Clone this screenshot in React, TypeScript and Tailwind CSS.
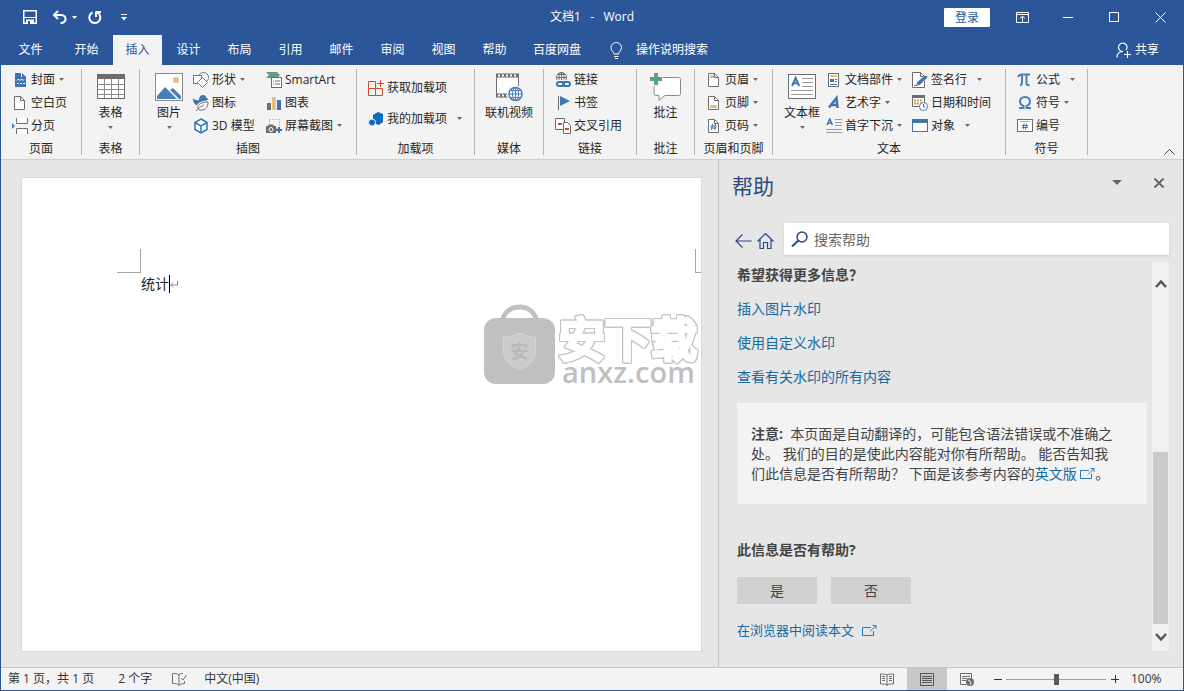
import type { ReactNode } from "react";

const BLUE = "#4a7ebb";
const GREY = "#6d6d6d";

function Caret({ className = "text-[#6a6a6a]" }: { className?: string }) {
  return (
    <svg width="5" height="3" viewBox="0 0 5 3" className={"shrink-0 " + className} aria-hidden="true">
      <path d="M0 0h5L2.5 3z" fill="currentColor" />
    </svg>
  );
}

function Svg({ w = 16, h = 16, children }: { w?: number; h?: number; children: ReactNode }) {
  return (
    <svg width={w} height={h} viewBox={`0 0 ${w} ${h}`} fill="none" className="shrink-0" aria-hidden="true">
      {children}
    </svg>
  );
}

/* ---------- ribbon icons ---------- */

const CoverIcon = () => (
  <Svg>
    <path d="M3 1h6v4h5v10H3z" fill="#3f74ad" />
    <path d="M10 1l4 4h-4z" fill="#3f74ad" />
    <path d="M5 8.500l1.500-1.500 1.500 1.500 1.500-1.500 1.500 1.500 1-1" stroke="#fff" />
    <path d="M5 11.500h8" stroke="#fff" strokeDasharray="2 1" />
  </Svg>
);
const BlankIcon = () => (
  <Svg>
    <path d="M2.500 1.500h6l4 4v9h-10z" fill="#fff" stroke={GREY} />
    <path d="M8.500 1.500v4h4" stroke={GREY} />
  </Svg>
);
const BreakIcon = () => (
  <Svg>
    <path d="M4.500 0v5.500h11V0M4.500 16v-5.500h11V16" fill="#fff" stroke={GREY} />
    <path d="M0 5l3 3-3 3z" fill={BLUE} />
  </Svg>
);
const TableIcon = () => (
  <Svg w={28} h={26}>
    <rect x="0.500" y="0.500" width="27" height="24" fill="#fff" stroke={GREY} />
    <path d="M0 0h28v5H0z" fill={GREY} />
    <path d="M7.500 5v19M14.500 5v19M21.500 5v19M1 10.500h26M1 15.500h26M1 20.500h26" stroke="#8a8a8a" />
  </Svg>
);
const PictureIcon = () => (
  <Svg w={28} h={28}>
    <rect x="0.500" y="0.500" width="27" height="27" fill="#fff" stroke="#8a8a8a" />
    <circle cx="21" cy="7" r="3" fill="#e6bf7c" />
    <path d="M2 26v-3l8-9 12 12z" fill={BLUE} />
    <path d="M15 17l3-2 8 8v3h-2z" fill={BLUE} />
  </Svg>
);
const ShapesIcon = () => (
  <Svg>
    <circle cx="10.500" cy="5.500" r="5" fill="#fff" stroke={BLUE} />
    <rect x="0.500" y="3.500" width="8" height="8" fill="#fff" stroke={BLUE} />
    <path d="M9.500 5.500l5 5-5 5-5-5z" fill="#fff" stroke="#5a82b0" />
  </Svg>
);
const IconsIcon = () => (
  <Svg>
    <path d="M0 3.500c2 1.500 4 2 6 1.500C6 2 7.500 0 10 0c2 0 3.500 1.500 3.500 3L15.500 4l-2 1.500C13 9 10 11 6 11 2 11 0 7 0 3.500z" fill="#3f74ad" />
    <path d="M5 13c0-4 4-6 10-6 0 5-2 8-7 8-1.500 0-3-.500-3-2z" fill="#fff" stroke="#f3f3f3" strokeWidth="3" />
    <path d="M5 13c0-4 4-6 10-6 0 5-2 8-7 8-1.500 0-3-.500-3-2z" fill="#fff" stroke={GREY} />
    <path d="M3 16c2-3 5-4.500 8-6" stroke={GREY} />
  </Svg>
);
const CubeIcon = () => (
  <Svg>
    <path d="M8 1l6 3.500v7L8 15l-6-3.500v-7z" fill="#fff" stroke="#2a78b8" strokeWidth="1.500" />
    <path d="M2 4.500L8 8l6-3.500M8 8v7" stroke="#2a78b8" strokeWidth="1.500" />
  </Svg>
);
const SmartArtIcon = () => (
  <Svg>
    <path d="M0 0h11l3 3-3 3H7v3H5V6H0l3-3z" fill="#5c9f84" />
    <rect x="5.500" y="5.500" width="10" height="10" fill="#fff" stroke={GREY} />
    <path d="M7 9h1M9 9h5M7 12h1M9 12h5" stroke={GREY} />
  </Svg>
);
const ChartIcon = () => (
  <Svg>
    <path d="M1 8h4v7H1z" fill={GREY} />
    <path d="M6 2h4v13H6z" fill="#e6bf7c" />
    <path d="M11 5h4v10h-4z" fill="#3f74ad" />
  </Svg>
);
const ScreenshotIcon = () => (
  <Svg>
    <rect x="3.500" y="1.500" width="10" height="9" stroke="#8a8a8a" strokeDasharray="1 2" />
    <path d="M0 8h2l1-1.500h4L8 8h2v7H0z" fill={GREY} />
    <circle cx="5" cy="11.500" r="2" stroke="#fff" />
    <path d="M13 9v6M10 12h6" stroke="#3f74ad" strokeWidth="2" />
  </Svg>
);
const GetAddinsIcon = () => (
  <Svg>
    <path d="M.500 1.500h7v7h-7zM.500 8.500h7v7h-7zM7.500 8.500h7v7h-7zM12.500 0v7M9 3.500h7" stroke="#c8502a" />
  </Svg>
);
const MyAddinsIcon = () => (
  <Svg>
    <path d="M5 4l5-3 5 2v8l-4 3-3-1-3-4z" fill="#0f6cbd" />
    <circle cx="4" cy="11.500" r="3.500" fill="#0f6cbd" stroke="#f3f3f3" />
  </Svg>
);
const VideoIcon = () => (
  <Svg w={30} h={28}>
    <rect x="2.500" y="2.500" width="22" height="20" fill="#fff" stroke={GREY} />
    <path d="M2 2.500h23M2 22.500h23" stroke={GREY} strokeWidth="4" />
    <path d="M4 2.500h20M4 22.500h20" stroke="#fff" strokeWidth="2" strokeDasharray="2 2" />
    <circle cx="21.500" cy="21" r="8.500" fill="#f3f3f3" />
    <circle cx="21.500" cy="21" r="6.500" fill="#fff" stroke={BLUE} strokeWidth="1.500" />
    <ellipse cx="21.500" cy="21" rx="3" ry="6.500" stroke={BLUE} />
    <path d="M15 21h13M16 17.500h11M16 24.500h11M21.500 14.500v13" stroke={BLUE} />
  </Svg>
);
const LinkIcon = () => (
  <Svg>
    <circle cx="6.500" cy="5.500" r="5" fill="#fff" stroke={GREY} />
    <path d="M1.500 5.500h10M6.500.500v10M3 2.500h7" stroke={GREY} />
    <ellipse cx="6.500" cy="5.500" rx="2.500" ry="5" stroke={GREY} />
    <path d="M1 8h15v8H1z" fill="#f3f3f3" />
    <rect x="2" y="10" width="7" height="4" rx="2" stroke="#3f74ad" strokeWidth="2" />
    <rect x="8" y="10" width="7" height="4" rx="2" stroke="#3f74ad" strokeWidth="2" />
  </Svg>
);
const BookmarkIcon = () => (
  <Svg>
    <path d="M3.500 1v14" stroke={GREY} />
    <path d="M5 1l10 5-10 5z" fill="#3f74ad" />
  </Svg>
);
const CrossRefIcon = () => (
  <Svg>
    <path d="M.500.500h9v11h-9z" fill="#fff" stroke={GREY} />
    <path d="M3 6h4" stroke="#c8502a" strokeWidth="2" />
    <path d="M8.500 4.500h4l3 3v8h-7z" fill="#fff" stroke={GREY} />
    <path d="M10 11h4" stroke="#c8502a" strokeWidth="2" />
  </Svg>
);
const CommentIcon = () => (
  <Svg w={32} h={30}>
    <path d="M4.500 5.500h24q2 0 2 2v14q0 2-2 2H15l-6 5v-5H6q-2 0-2-2z" fill="#fff" stroke="#8a8a8a" />
    <path d="M6 0v14M0 7h13" stroke="#f3f3f3" strokeWidth="6" />
    <path d="M6 1v12M0 7h12" stroke="#5c9f84" strokeWidth="4" />
  </Svg>
);
const HeaderFooterIcon = ({ kind }: { kind: "head" | "foot" | "number" }) => (
  <Svg w={12} h={14}>
    <path d="M1.500.500h6l4 4v9h-10z" fill="#fff" stroke={GREY} />
    <path d="M7.500.500v4h4" stroke={GREY} />
    {kind === "head" && <path d="M3 2h4v3H3z" fill="#e6bf7c" />}
    {kind === "foot" && <path d="M3 9h7v3H3z" fill="#e6bf7c" />}
    {kind === "number" && <path d="M5.500 5l-1 6M8.500 5l-1 6M3.500 7h6M3.500 9h6" stroke="#3f74ad" />}
  </Svg>
);
const LetterA = ({ x, y, s }: { x: number; y: number; s: number }) => (
  <path
    d={`M${x} ${y + s}L${x + s * 0.45} ${y}L${x + s * 0.9} ${y + s}M${x + s * 0.2} ${y + s * 0.65}h${s * 0.5}`}
    stroke="#3f74ad"
    strokeWidth={s > 6 ? 2 : 1.5}
  />
);
const TextBoxIcon = () => (
  <Svg w={28} h={26}>
    <rect x="0.500" y="0.500" width="27" height="24" fill="#fff" stroke={GREY} />
    <LetterA x={4} y={4} s={8} />
    <path d="M14 4.500h11M14 8.500h11M14 12.500h11M3 16.500h22M3 20.500h22" stroke="#9a9a9a" />
  </Svg>
);
const PartsIcon = () => (
  <Svg>
    <rect x="2.500" y="1.500" width="10" height="13" fill="#fff" stroke={GREY} />
    <path d="M4 3h7v2H4z" fill="#e6bf7c" />
    <path d="M4 7h4v3H4z" fill="#3f74ad" />
    <path d="M9 7.500h2M9 9.500h2M4 12.500h7" stroke="#3f74ad" />
  </Svg>
);
const WordArtIcon = () => (
  <Svg>
    <path d="M3 12.500L10.500 3l1 10M5 10h6" stroke="#3f74ad" strokeWidth="2.500" />
  </Svg>
);
const DropCapIcon = () => (
  <Svg>
    <LetterA x={1} y={1} s={6} />
    <path d="M9 1.500h7M9 4.500h7M9 7.500h7M0 11.500h16M0 14.500h16" stroke="#9a9a9a" />
  </Svg>
);
const SignatureIcon = () => (
  <Svg>
    <path d="M.500.500h8l4 4v11H.500z" fill="#fff" stroke={GREY} />
    <path d="M8.500.500v4h4" stroke={GREY} />
    <path d="M4 14l1-4 8-7 3 2-8 8z" fill="#3f74ad" stroke="#f3f3f3" strokeWidth=".500" />
    <path d="M2 13.500h3" stroke={GREY} />
  </Svg>
);
const DateIcon = () => (
  <Svg>
    <rect x=".500" y=".500" width="12" height="11" fill="#fff" stroke={GREY} />
    <path d="M0 0h13v3H0z" fill={GREY} />
    <path d="M2 5.500h9M2 8.500h9" stroke="#cf9a45" strokeWidth="2" strokeDasharray="2 1" />
    <circle cx="11.500" cy="11.500" r="4" fill="#fff" stroke={BLUE} />
    <path d="M11.500 9v3h2" stroke={BLUE} />
  </Svg>
);
const ObjectIcon = () => (
  <Svg>
    <rect x=".500" y="1.500" width="15" height="12" fill="#fff" stroke="#3f74ad" />
    <path d="M0 1h16v4H0z" fill="#3f74ad" />
  </Svg>
);
const PiIcon = () => (
  <Svg>
    <path d="M1 5c1-2 2-2.500 4-2.500h8M5 3v7c0 2-.500 3-2 3.500M9.500 3v8c0 2 1 2.500 3 2" stroke={BLUE} strokeWidth="2" />
  </Svg>
);
const OmegaIcon = () => (
  <Svg>
    <path d="M2 13h4.500v-2C4 10 3 8.500 3 6.500 3 4 5 2 8 2s5 2 5 4.500c0 2-1 3.500-3.500 4.500v2H14" stroke={BLUE} strokeWidth="2" />
  </Svg>
);
const NumberIcon = () => (
  <Svg>
    <rect x=".500" y="1.500" width="15" height="12" fill="#fff" stroke={GREY} />
    <path d="M3 3.500h10" stroke="#b0b0b0" />
    <path d="M7 5.500l-1 6M9.500 5.500l-1 6M5 7.500h6M5 9.500h6" stroke="#3f74ad" />
  </Svg>
);

/* ---------- ribbon building blocks ---------- */

function Group({ label, width, children }: { label: string; width: string; children: ReactNode }) {
  return (
    <section className={"flex shrink-0 " + width} aria-label={label}>
      <div className="flex min-w-0 flex-1 flex-col pt-[3px]">
        <div className="flex h-[69px] shrink-0">{children}</div>
        <div className="whitespace-nowrap text-center leading-6">{label}</div>
      </div>
      <div className="my-1 w-px bg-[#b4b4b4]" />
    </section>
  );
}

function Small({ icon, label, caret, wide }: { icon: ReactNode; label: string; caret?: boolean; wide?: boolean }) {
  return (
    <button className="flex h-[23px] items-center gap-[3px] whitespace-nowrap">
      {icon}
      <span>{label}</span>
      {caret && <span className={wide ? "pl-[7px]" : "pl-px"}><Caret /></span>}
    </button>
  );
}

function Big({ icon, label, caret }: { icon: ReactNode; label: string; caret?: boolean }) {
  return (
    <button className="flex flex-col items-center whitespace-nowrap pt-[3px]">
      <span className="flex h-8 items-center justify-center">{icon}</span>
      <span className="leading-[20px]">{label}</span>
      {caret && <span className="flex h-2 items-center"><Caret /></span>}
    </button>
  );
}

const Col = ({ className = "", children }: { className?: string; children: ReactNode }) => (
  <div className={"flex flex-col items-start " + className}>{children}</div>
);

const Center = ({ children }: { children: ReactNode }) => (
  <div className="flex flex-1 flex-col items-center">{children}</div>
);

function Ribbon() {
  return (
    <div className="flex h-[95px] shrink-0 border-b border-[#cfcfcf] bg-[#f3f3f3] text-[#262626]">
      <Group label="页面" width="w-[81px]">
        <Col className="pl-[11px]">
          <Small icon={<CoverIcon />} label="封面" caret />
          <Small icon={<BlankIcon />} label="空白页" />
          <Small icon={<BreakIcon />} label="分页" />
        </Col>
      </Group>
      <Group label="表格" width="w-[58px]">
        <Center><Big icon={<TableIcon />} label="表格" caret /></Center>
      </Group>
      <Group label="插图" width="w-[217px]">
        <Col className="w-[53px] pl-[15px]"><Big icon={<PictureIcon />} label="图片" caret /></Col>
        <Col className="w-[73px]">
          <Small icon={<ShapesIcon />} label="形状" caret />
          <Small icon={<IconsIcon />} label="图标" />
          <Small icon={<CubeIcon />} label="3D 模型" />
        </Col>
        <Col>
          <Small icon={<SmartArtIcon />} label="SmartArt" />
          <Small icon={<ChartIcon />} label="图表" />
          <Small icon={<ScreenshotIcon />} label="屏幕截图" caret />
        </Col>
      </Group>
      <Group label="加载项" width="w-[118px]">
        <Col className="gap-2 pl-[11px] pt-2">
          <Small icon={<GetAddinsIcon />} label="获取加载项" />
          <Small icon={<MyAddinsIcon />} label="我的加载项" caret wide />
        </Col>
      </Group>
      <Group label="媒体" width="w-[69px]">
        <Center><Big icon={<VideoIcon />} label="联机视频" /></Center>
      </Group>
      <Group label="链接" width="w-[93px]">
        <Col className="pl-[11px]">
          <Small icon={<LinkIcon />} label="链接" />
          <Small icon={<BookmarkIcon />} label="书签" />
          <Small icon={<CrossRefIcon />} label="交叉引用" />
        </Col>
      </Group>
      <Group label="批注" width="w-[58px]">
        <Center><Big icon={<CommentIcon />} label="批注" /></Center>
      </Group>
      <Group label="页眉和页脚" width="w-[78px]">
        <Col className="pl-3">
          <Small icon={<span className="pr-[3px]"><HeaderFooterIcon kind="head" /></span>} label="页眉" caret />
          <Small icon={<span className="pr-[3px]"><HeaderFooterIcon kind="foot" /></span>} label="页脚" caret />
          <Small icon={<span className="pr-[3px]"><HeaderFooterIcon kind="number" /></span>} label="页码" caret />
        </Col>
      </Group>
      <Group label="文本" width="w-[233px]">
        <Col className="w-[53px] pl-[11px]"><Big icon={<TextBoxIcon />} label="文本框" caret /></Col>
        <Col className="w-[86px]">
          <Small icon={<PartsIcon />} label="文档部件" caret />
          <Small icon={<WordArtIcon />} label="艺术字" caret />
          <Small icon={<DropCapIcon />} label="首字下沉" caret />
        </Col>
        <Col>
          <Small icon={<SignatureIcon />} label="签名行" caret wide />
          <Small icon={<DateIcon />} label="日期和时间" />
          <Small icon={<ObjectIcon />} label="对象" caret wide />
        </Col>
      </Group>
      <Group label="符号" width="w-[82px]">
        <Col className="pl-[11px]">
          <Small icon={<PiIcon />} label="公式" caret wide />
          <Small icon={<OmegaIcon />} label="符号" caret />
          <Small icon={<NumberIcon />} label="编号" />
        </Col>
      </Group>
      <button className="ml-auto self-end px-2 pb-1" aria-label="折叠功能区">
        <Svg w={11} h={6}><path d="M.500 5.500l5-5 5 5" stroke="#444" /></Svg>
      </button>
    </div>
  );
}

/* ---------- title bar and tabs ---------- */

function TitleBar() {
  return (
    <header className="grid h-[34px] shrink-0 grid-cols-[1fr_auto_1fr] items-center">
      <div className="flex items-center pl-[22px]">
        <button aria-label="保存">
          <Svg w={14} h={14}>
            <path d="M.750.750h12.500v12.500H.750z" stroke="#fff" strokeWidth="1.500" />
            <path d="M1 7.500h12" stroke="#fff" />
            <path d="M3 9.500h8V14H3z" fill="#fff" />
            <path d="M5 11h2v3H5z" fill="#2b579a" />
          </Svg>
        </button>
        <button className="flex items-center gap-[5px] pl-[15px]" aria-label="撤消">
          <Svg w={15} h={14}>
            <path d="M6 1L2 5l4 4M2 5h7c3 0 4.500 2 4.500 4S12 13 8.500 13" stroke="#fff" strokeWidth="2" />
          </Svg>
          <Caret className="text-white" />
        </button>
        <button className="pl-[11px]" aria-label="恢复">
          <Svg w={14} h={14}>
            <path d="M4.500 2.500a5.500 5.500 0 1 0 5 .200M8 7V1.500M8 2h5" stroke="#fff" strokeWidth="2" />
          </Svg>
        </button>
        <button className="pl-[19px]" aria-label="自定义快速访问工具栏">
          <Svg w={6} h={7}><path d="M0 .500h6" stroke="#fff" /><path d="M0 3h6L3 6.500z" fill="#fff" /></Svg>
        </button>
      </div>
      <h1 className="whitespace-pre text-white">文档1   -   Word</h1>
      <div className="flex h-full items-center justify-end">
        <button className="mr-[9px] h-[19px] w-[46px] rounded-[1px] bg-white leading-[19px] text-[#2b579a]">登录</button>
        <button className="flex w-[46px] justify-center" aria-label="功能区显示选项">
          <Svg w={13} h={11}><path d="M.500.500h12v10H.500zM.500 2.500h12M6.500 10V4.500M4 6.500l2.500-2.500L9 6.500" stroke="#fff" /></Svg>
        </button>
        <button className="flex w-[46px] justify-center" aria-label="最小化">
          <Svg w={10} h={10}><path d="M0 5.500h10" stroke="#fff" /></Svg>
        </button>
        <button className="flex w-[46px] justify-center" aria-label="最大化">
          <Svg w={10} h={10}><path d="M.500.500h9v9h-9z" stroke="#fff" /></Svg>
        </button>
        <button className="flex w-[46px] justify-center" aria-label="关闭">
          <Svg w={11} h={11}><path d="M.500.500l10 10M10.500.500l-10 10" stroke="#fff" /></Svg>
        </button>
      </div>
    </header>
  );
}

const TABS = ["开始", "插入", "设计", "布局", "引用", "邮件", "审阅", "视图", "帮助"];

function TabBar() {
  return (
    <nav className="flex h-[31px] shrink-0 pt-px text-white">
      <button className="w-[59px]">文件</button>
      <div className="flex gap-[2px] pl-[2px]">
        {TABS.map((t) => (
          <button key={t} className={t === "插入" ? "w-[49px] bg-[#f3f3f3] text-[#2b579a]" : "w-[49px]"}>{t}</button>
        ))}
        <button className="px-3">百度网盘</button>
      </div>
      <button className="flex items-center gap-[13px] pl-[17px]">
        <Svg w={13} h={17}>
          <path d="M4 12c0-2-3-3-3-6.500a5.250 5 0 0 1 10.500 0C11.500 9 8.500 10 8.500 12zM4 14.500h4.500M5 16.500h3" stroke="#fff" />
        </Svg>
        操作说明搜索
      </button>
      <button className="ml-auto flex items-center gap-1 pr-6">
        <Svg w={15} h={16}>
          <path d="M7 9.500a4.250 4.250 0 1 1 3-1.500M1 15.500c0-3 2-5.500 5-6M8 12.500h7M11.500 9v7" stroke="#fff" strokeWidth="1.200" />
        </Svg>
        共享
      </button>
    </nav>
  );
}

/* ---------- document ---------- */

function Watermark() {
  return (
    <div className="absolute right-1 top-[126px] flex select-none items-end gap-1 text-[#c0c0c0]" aria-hidden="true">
      <svg width="71" height="80" viewBox="0 0 71 80">
        <path d="M18 18C20 8 27 3 35.500 3S51 8 53 18" fill="none" stroke="#c0c0c0" strokeWidth="5" />
        <rect y="14" width="71" height="66" rx="12" fill="#c0c0c0" />
        <path d="M35.500 29c5 3 10 4 16 4v14c0 9-7 15-16 19-9-4-16-10-16-19V33c6 0 11-1 16-4z" fill="#cbcbc9" stroke="#d6d6d2" />
        <text x="35.500" y="54" textAnchor="middle" fontSize="18" fontWeight="700" fill="#b8b8b8" fontFamily="Noto Sans CJK SC">安</text>
      </svg>
      <div className="flex flex-col">
        <span className="text-[46px] font-normal leading-[42px] text-white [-webkit-text-stroke:4px_white] [filter:drop-shadow(1px_0_0_#c4c4c4)_drop-shadow(-1px_0_0_#c4c4c4)_drop-shadow(0_1px_0_#c4c4c4)_drop-shadow(0_-1px_0_#c4c4c4)]">安下载</span>
        <span className="pl-[3px] font-['Open_Sans'] text-[29px] font-semibold leading-[25px]">anxz.com</span>
      </div>
    </div>
  );
}

function DocumentArea() {
  return (
    <main className="flex min-w-0 flex-1 pb-4 pl-[21px] pr-[17px] pt-[18px]">
      <div className="relative flex-1 overflow-hidden bg-white pt-[71px] outline outline-[#d9d9d9]">
        <div className="flex justify-between pl-[95px]">
          <div className="h-6 w-6 border-b border-r border-[#a6a6a6]" />
          <div className="h-6 w-[6px] border-b border-l border-[#a6a6a6]" />
        </div>
        <div className="flex items-center pl-[119px] pt-px text-sm text-[#222]">
          <span>统计</span>
          <span className="h-[18px] w-px bg-black" />
          <Svg w={8} h={8}><path d="M7.500 1v4H1M3 2.500L.500 5 3 7.500" stroke="#8a8a8a" /></Svg>
        </div>
        <Watermark />
      </div>
    </main>
  );
}

/* ---------- help pane ---------- */

const ExternalIcon = () => (
  <svg width="15" height="11" viewBox="0 0 15 11" fill="none" className="inline-block align-baseline" aria-hidden="true">
    <path d="M9 2.500H.500v8h11V6M8 6.500L14 .500M10.500.500H14V4" stroke="#2a78b8" />
  </svg>
);

function ScrollBar() {
  return (
    <div className="flex w-[17px] shrink-0 flex-col items-center bg-[#f0f0f0] px-px" aria-hidden="true">
      <div className="flex h-[42px] items-center">
        <Svg w={12} h={9}><path d="M1 8l5-5.500L11 8" stroke="#555" strokeWidth="2.500" /></Svg>
      </div>
      <div className="w-full grow-[148]" />
      <div className="w-full grow-[173] bg-[#cacaca]" />
      <div className="flex h-[27px] items-center">
        <Svg w={12} h={9}><path d="M1 1l5 5.500L11 1" stroke="#555" strokeWidth="2.500" /></Svg>
      </div>
    </div>
  );
}

function HelpPane() {
  return (
    <aside className="flex w-[465px] shrink-0 flex-col border-l border-[#c0c0c0] pb-4 pr-[14px] text-sm text-[#444]">
      <div className="flex h-[46px] items-center justify-between pl-[13px] pt-[5px]">
        <h2 className="text-[21px] text-[#2a4a80]">帮助</h2>
        <div className="flex items-center gap-[31px] pb-[6px] pr-1">
          <button aria-label="任务窗格选项">
            <Svg w={10} h={5}><path d="M0 0h10L5 5z" fill="#666" /></Svg>
          </button>
          <button aria-label="关闭">
            <Svg w={12} h={10}><path d="M1.500.500l9 9M10.500.500l-9 9" stroke="#666" strokeWidth="2" /></Svg>
          </button>
        </div>
      </div>
      <div className="flex items-center pl-4 pt-[17px]">
        <button className="pt-[3px]" aria-label="后退">
          <Svg w={17} h={14}><path d="M16.500 7H1M7.500.500L1 7l6.500 6.500" stroke="#2a4a80" strokeWidth="1.200" /></Svg>
        </button>
        <button className="pl-[5px] pt-[3px]" aria-label="主页">
          <Svg w={17} h={16}><path d="M.500 8.500l8-8 8 8M3 6.500v9h3.500v-6h4v6H14v-9" stroke="#2a4a80" strokeWidth="1.200" /></Svg>
        </button>
        <label className="ml-[10px] flex h-8 flex-1 items-center gap-[6px] bg-white pl-[7px] shadow-sm">
          <Svg w={17} h={16}><circle cx="11" cy="6" r="5" stroke="#2a4a80" strokeWidth="1.500" /><path d="M7.500 9.500L1 15.500" stroke="#2a4a80" strokeWidth="2" /></Svg>
          <input type="search" aria-label="搜索帮助" placeholder="搜索帮助" className="min-w-0 flex-1 pt-px outline-none placeholder:text-[#666]" />
        </label>
      </div>
      <div className="mt-[7px] flex min-h-0 flex-1">
        <div className="flex min-w-0 flex-1 flex-col items-start overflow-hidden pl-[18px] pr-[5px]">
          <h3 className="font-bold leading-[26px]">希望获得更多信息？</h3>
          <div className="flex flex-col gap-[14px] pb-4 pt-[11px] leading-5 text-[#19689f]">
            <a href="#picture">插入图片水印</a>
            <a href="#custom">使用自定义水印</a>
            <a href="#all">查看有关水印的所有内容</a>
          </div>
          <p className="w-full bg-[#f3f3f3] pb-5 pl-[14px] pr-7 pt-[21px] leading-5">
            <b>注意:</b>{"\u00a0 "}本页面是自动翻译的，可能包含语法错误或不准确之处。 我们的目的是使此内容能对你有所帮助。 能否告知我们此信息是否有所帮助？ 下面是该参考内容的
            <a href="#english" className="text-[#19689f]">英文版 <ExternalIcon /></a>。
          </p>
          <h3 className="pt-9 font-bold leading-5">此信息是否有帮助?</h3>
          <div className="flex gap-[14px] pt-[17px]">
            <button className="h-[27px] w-20 bg-[#d0d0d0]">是</button>
            <button className="h-[27px] w-20 bg-[#d0d0d0]">否</button>
          </div>
          <a href="#browser" className="flex items-center gap-2 pt-4 text-[13px] leading-5 text-[#19689f]">在浏览器中阅读本文 <ExternalIcon /></a>
        </div>
        <ScrollBar />
      </div>
    </aside>
  );
}

/* ---------- status bar ---------- */

function StatusBar() {
  return (
    <footer className="flex h-[23px] shrink-0 items-center border-t border-[#c6c6c6] bg-[#f3f3f3] text-[#333]">
      <span className="pl-[7px]">第 1 页，共 1 页</span>
      <span className="pl-6">2 个字</span>
      <button className="pl-5" aria-label="校对">
        <Svg w={15} h={13}><path d="M7 2C5 .500 3 .500.500.500v10c3 0 5 0 6.500 2V2c1-1 2-1.500 4-1.500M7 12.500c1-1.500 3-2 5.500-2V8M9 5l2 2 3.500-5" stroke={GREY} /></Svg>
      </button>
      <span className="pl-[17px]">中文(中国)</span>
      <div className="ml-auto flex h-full items-center">
        <button className="flex w-10 justify-center" aria-label="阅读视图">
          <Svg w={14} h={13}><path d="M7 2v11M7 2C5 1 3 1 .500 1v10c3 0 5 0 6.500 1 1.500-1 3.500-1 6.500-1V1C11 1 9 1 7 2zM2 3.500h3M2 5.500h3M2 7.500h3M9 3.500h3M9 5.500h3M9 7.500h3" stroke={GREY} /></Svg>
        </button>
        <button className="flex h-full w-10 items-center justify-center bg-[#c8c8c8]" aria-label="页面视图">
          <Svg w={14} h={13}><path d="M.500.500h13v12H.500zM2 3.500h10M2 5.500h10M2 7.500h10M2 9.500h10" stroke="#555" /></Svg>
        </button>
        <button className="flex w-10 justify-center" aria-label="Web 版式视图">
          <Svg w={14} h={13}>
            <path d="M6 11.500H.500V.500h11V5M2 3.500h8M2 5.500h5M2 7.500h4" stroke={GREY} />
            <circle cx="10" cy="9" r="4" fill={GREY} />
            <path d="M8 7l2 1 1 2M10 12l1-2" stroke="#f3f3f3" />
          </Svg>
        </button>
        <button className="ml-[3px] flex w-[15px] justify-center" aria-label="缩小"><Svg w={8} h={8}><path d="M0 4.500h8" stroke="#333" /></Svg></button>
        <input
          type="range"
          aria-label="缩放"
          defaultValue={50}
          className="mx-px h-3 w-[100px] appearance-none bg-transparent [&::-webkit-slider-runnable-track]:h-px [&::-webkit-slider-runnable-track]:bg-[#a0a0a0] [&::-webkit-slider-thumb]:-mt-[5px] [&::-webkit-slider-thumb]:h-[11px] [&::-webkit-slider-thumb]:w-[5px] [&::-webkit-slider-thumb]:appearance-none [&::-webkit-slider-thumb]:bg-[#5a5a5a]"
        />
        <button className="flex w-[15px] justify-center" aria-label="放大"><Svg w={8} h={8}><path d="M0 4.500h8M4.500 0v8" stroke="#333" /></Svg></button>
        <span className="w-[61px] pl-[9px]">100%</span>
      </div>
    </footer>
  );
}

export default function App() {
  return (
    <div className="flex h-screen flex-col border border-t-0 border-[#2b579a] bg-[#2b579a] font-['Open_Sans','Noto_Sans_CJK_SC',sans-serif] text-xs">
      <TitleBar />
      <TabBar />
      <Ribbon />
      <div className="flex min-h-0 flex-1 bg-[#e6e6e6]">
        <DocumentArea />
        <HelpPane />
      </div>
      <StatusBar />
    </div>
  );
}
